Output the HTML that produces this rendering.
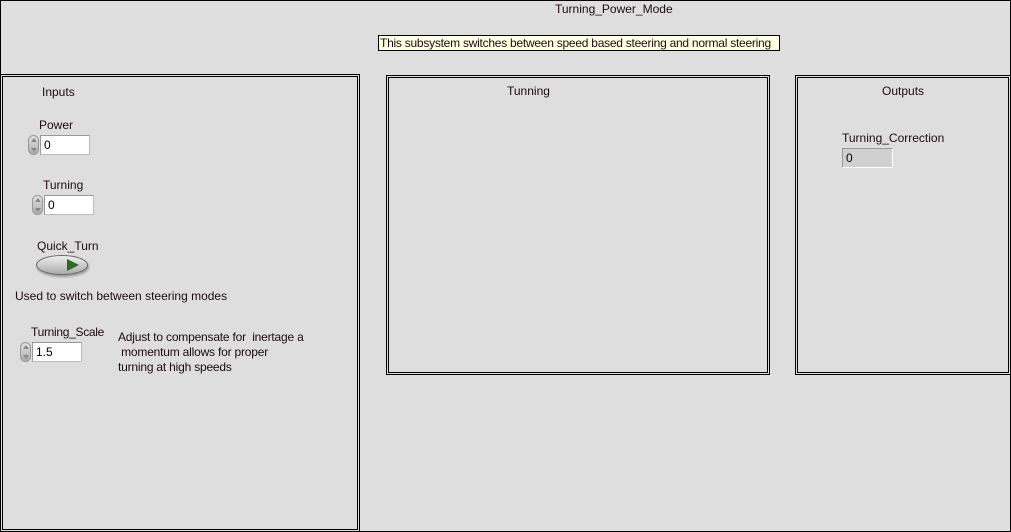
<!DOCTYPE html>
<html><head><style>
*{margin:0;padding:0;box-sizing:border-box}
body{width:1011px;height:532px;background:#dedede;font-family:"Liberation Sans",sans-serif;font-size:12px;color:#1e0a14;position:relative;overflow:hidden}
.a{position:absolute;white-space:nowrap}
.frame{position:absolute;left:0;top:0;width:1011px;height:532px;border:1px solid #000}
.p{position:absolute;border:3px double #000}
.num{position:absolute;height:20px;background:#fff;border:1px solid #bbb;border-top-color:#999;border-left-color:#999;padding-left:3px;line-height:18px;color:#000}
.spin{position:absolute;width:11px;height:20px;border-radius:6px;background:linear-gradient(#e4e4e4,#aaa);border:1px solid #999}
.spin:before{content:"";position:absolute;left:2px;top:2px;border:3px solid transparent;border-bottom:4px solid #888;border-top:0}
.spin:after{content:"";position:absolute;left:2px;bottom:2px;border:3px solid transparent;border-top:4px solid #888;border-bottom:0}
</style></head><body>
<div class="frame"></div>
<div class="a" style="left:555px;top:2px">Turning_Power_Mode</div>
<div class="a" style="left:378px;top:35px;width:402px;height:16px;background:#ffffe1;border:1px solid #000;line-height:14px;padding-left:1px;letter-spacing:-0.25px;overflow:hidden">This subsystem switches between speed based steering and normal steering</div>

<div class="p" style="left:0;top:74px;width:360px;height:458px"></div>
<div class="p" style="left:386px;top:75px;width:384px;height:300px"></div>
<div class="p" style="left:795px;top:75px;width:216px;height:300px"></div>

<div class="a" style="left:42px;top:85px">Inputs</div>
<div class="a" style="left:39px;top:118px">Power</div>
<div class="spin" style="left:28px;top:135px"></div>
<div class="num" style="left:40px;top:135px;width:50px">0</div>
<div class="a" style="left:43px;top:178px">Turning</div>
<div class="spin" style="left:32px;top:195px"></div>
<div class="num" style="left:44px;top:195px;width:50px">0</div>
<div class="a" style="left:37px;top:239px">Quick_Turn</div>
<div class="a" style="left:36px;top:255px;width:52px;height:20px;border-radius:50%;background:linear-gradient(#f0f0f0,#aaa);border:1px solid #666;box-shadow:1px 2px 2px #999"></div>
<div class="a" style="left:67px;top:259px;width:0;height:0;border-top:6px solid transparent;border-bottom:6px solid transparent;border-left:12px solid #2d6a1e"></div>
<div class="a" style="left:15px;top:289px">Used to switch between steering modes</div>
<div class="a" style="left:31px;top:325px;letter-spacing:-0.3px">Turning_Scale</div>
<div class="spin" style="left:20px;top:342px"></div>
<div class="num" style="left:32px;top:342px;width:50px">1.5</div>
<div class="a" style="left:118px;top:330px;line-height:15px;letter-spacing:-0.2px">Adjust to compensate for&nbsp; inertage a<br>&nbsp;momentum allows for proper<br>turning at high speeds</div>

<div class="a" style="left:507px;top:84px">Tunning</div>
<div class="a" style="left:882px;top:84px">Outputs</div>
<div class="a" style="left:842px;top:131px">Turning_Correction</div>
<div class="num" style="left:842px;top:148px;width:51px;background:#d0d0d0;border-color:#999 #fff #fff #999">0</div>
</body></html>
